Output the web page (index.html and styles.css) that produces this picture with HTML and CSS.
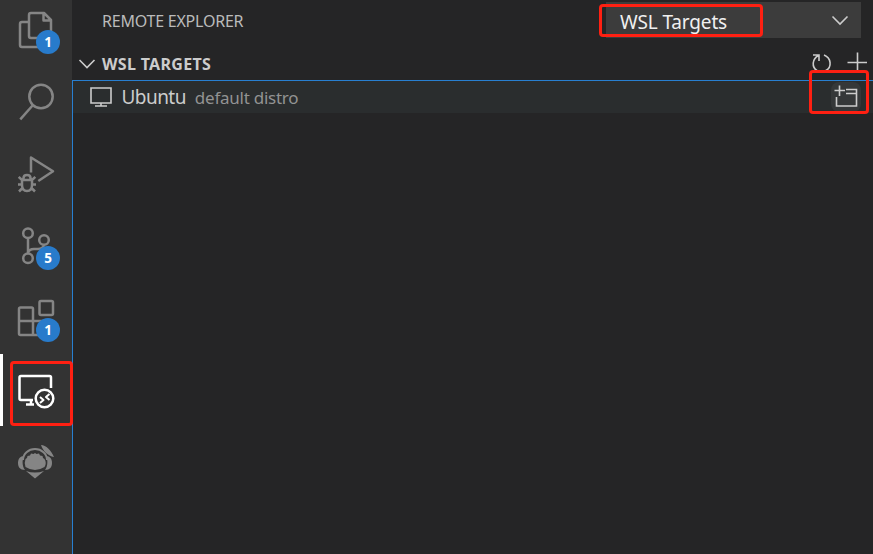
FILE: index.html
```html
<!DOCTYPE html>
<html lang="en">
<head>
<meta charset="utf-8">
<title>Remote Explorer</title>
<link rel="stylesheet" href="styles.css">
</head>
<body>
<div class="workbench">
  <nav class="activity-bar">
    <div class="activity">
      <svg viewBox="0 -6 72 72"><path d="M29 22H22Q20 22 20 24V45Q20 47 22 47H40M31 13H44L51 20V36Q51 38 49 38H31Q29 38 29 36V15Q29 13 31 13ZM43.5 13V20.5H51"/></svg>
      <span class="badge">1</span>
    </div>
    <div class="activity">
      <svg viewBox="0 66 72 72"><circle cx="41" cy="96.5" r="11.7"/><path d="M33 105L20.3 119.3"/></svg>
    </div>
    <div class="activity">
      <svg viewBox="0 138 72 72"><path d="M31 172.5V157.5L53 171.3L38.3 181"/><path d="M22 180H32V185Q32 191 27 191T22 185ZM23.5 180V178Q23.5 175 27 175T30.5 178V180M22 180L18.7 176.8M32 180L35.3 176.8M22 184.5H18M32 184.5H36M22.5 188L19 191.5M31.5 188L35 191.5"/></svg>
    </div>
    <div class="activity">
      <svg viewBox="0 210 72 72"><circle cx="28" cy="233.2" r="4.8"/><circle cx="44" cy="240" r="4.8"/><circle cx="28" cy="258.3" r="4.8"/><path d="M28 238V253.5M44 245Q43 249 38 249H34Q29 249 28 253"/></svg>
      <span class="badge">5</span>
    </div>
    <div class="activity">
      <svg viewBox="0 282 72 72"><path d="M33 321V309Q33 307.500 31.500 307.500H20.500Q19 307.500 19 309V333.500Q19 335 20.500 335H46V321H19M33 321V335"/><rect x="39.500" y="301" width="13.500" height="14" rx="1.500"/></svg>
      <span class="badge">1</span>
    </div>
    <div class="activity active">
      <svg viewBox="0 354 72 72"><path d="M51 388V377.500Q51 376 49.500 376H21Q19.500 376 19.500 377.500V398.500Q19.500 400 21 400H33M31 400V404.500M26 404.500H34"/><circle cx="44.500" cy="398.500" r="8.800"/><path class="thin" d="M40 397L43.500 400L40 403M49.500 394L46 397L49.500 400"/></svg>
    </div>
    <div class="activity">
      <svg viewBox="0 426 72 72"><path class="thin" d="M23 460A12 11 0 0 1 47 460"/><path class="solid" d="M24 456C20 456 18 459 18 463C18 467 20 470 25 470C22 466 22 460 24 456ZM46 456C50 456 52 459 52 463C52 467 50 470 45 470C48 466 48 460 46 456ZM41 445C46 445 51 450 54 457C48 456 43 451 41 445ZM26 471Q35 474 44 471L35 478.500Z"/><path class="solid" d="M25.500 467Q24 463 25.500 459L27 458L27.500 456L30 455.500L31 453.500L33.500 454L35 453L36.500 454L39 453.500L40 455.500L42.500 456L43 458L44.500 459Q47 463 44.500 467Q35 473 25.500 467Z"/></svg>
    </div>
  </nav>
  <main class="sidebar">
    <header class="title-row">
      <h1>REMOTE EXPLORER</h1>
      <div class="select"><span>WSL Targets</span><svg width="18" height="12" viewBox="0 0 18 12"><path d="M1.500 2.500L9 10L16.500 2.500"/></svg></div>
    </header>
    <div class="section-row">
      <svg width="18" height="12" viewBox="0 0 18 12"><path d="M1.500 2L9 9.500L16.500 2"/></svg>
      <h2>WSL TARGETS</h2>
      <svg class="actions" width="63" height="32" viewBox="810 48 63 32"><path d="M813 55H819V61M818.500 55.500C812 59 811.500 67 817 70.500Q821.500 73 826 70.500C832 67 831.500 58 824 55M857.500 52.500V72M847.500 62.500H867"/></svg>
    </div>
    <section class="tree">
      <div class="tree-row">
        <svg class="monitor" width="22" height="20" viewBox="90 87 22 20"><path d="M91 88H111V103H91ZM101 103V106M95 106H107"/></svg>
        <span class="name">Ubuntu</span>
        <span class="description">default distro</span>
        <span class="open"><svg width="30" height="30" viewBox="831 82 30 30"><path d="M839.500 85.500V96M834.500 90.500H845M846 89.500H856.500V106H836.500V97M846 93.500H856.500"/></svg></span>
      </div>
    </section>
  </main>
  <div class="mark mark-select"></div>
  <div class="mark mark-open"></div>
  <div class="mark mark-remote"></div>
</div>
</body>
</html>
```
FILE: styles.css
```css
* { box-sizing: border-box; }
body { margin: 0; background: #252526; font-family: "Noto Sans", sans-serif; color: #ccc; }
svg { display: block; fill: none; stroke: currentColor; stroke-width: 1.6; flex: none; }
h1, h2 { margin: 0; white-space: nowrap; }
.workbench { position: relative; display: flex; width: 873px; height: 554px; overflow: hidden; }
.activity-bar { width: 72px; flex: none; background: #333; color: #858585; display: flex; flex-direction: column; }
.activity { position: relative; height: 72px; flex: none; }
.activity:first-child { margin-top: -6px; }
.activity svg { width: 72px; height: 72px; stroke-width: 2.5; stroke-linejoin: round; }
.activity svg .thin { stroke-width: 2; }
.activity svg .solid { fill: currentColor; stroke: none; }
.active { color: #fff; border-left: 3px solid #fff; }
.active svg { margin-left: -3px; }
.badge { position: absolute; left: 36px; top: 36px; width: 24px; height: 24px; border-radius: 50%; background: #287bcb; color: #fff; font-size: 13.5px; font-weight: 700; line-height: 25px; text-align: center; }
.sidebar { flex: 1; min-width: 0; display: flex; flex-direction: column; }
.title-row { height: 48px; display: flex; justify-content: space-between; padding: 2px 12px 0 30px; }
h1 { font-size: 16px; font-weight: 400; line-height: 38px; letter-spacing: -0.22px; color: #bbb; }
.select { width: 255px; height: 36px; background: #3c3c3c; color: #f0f0f0; display: flex; align-items: center; justify-content: space-between; padding: 4px 12px 0 14px; font-size: 19px; letter-spacing: -0.15px; }
.select svg { margin-top: -4px; color: #ccc; }
.section-row { height: 32px; display: flex; align-items: center; padding-left: 6px; }
h2 { font-size: 16px; font-weight: 700; margin-left: 6px; letter-spacing: 0.32px; }
.actions { margin-left: auto; }
.tree { flex: 1; border: solid #287fd0; border-width: 1px 0 0 1px; }
.tree-row { height: 32px; display: flex; align-items: center; background: #2a2d2e; padding: 0 12px 0 17px; }
.name { font-size: 19px; margin-left: 9.5px; letter-spacing: -0.55px; }
.description { font-size: 17px; margin-left: 9px; color: #929393; letter-spacing: -0.25px; }
.open { margin-left: auto; border-radius: 8px; background: #353839; }
.mark { position: absolute; border: 3px solid #ff2012; border-radius: 4px; }
.mark-select { left: 599px; top: 4px; width: 164px; height: 33px; }
.mark-open { left: 809px; top: 70px; width: 60px; height: 44px; }
.mark-remote { left: 10px; top: 361px; width: 63px; height: 65px; }
```
